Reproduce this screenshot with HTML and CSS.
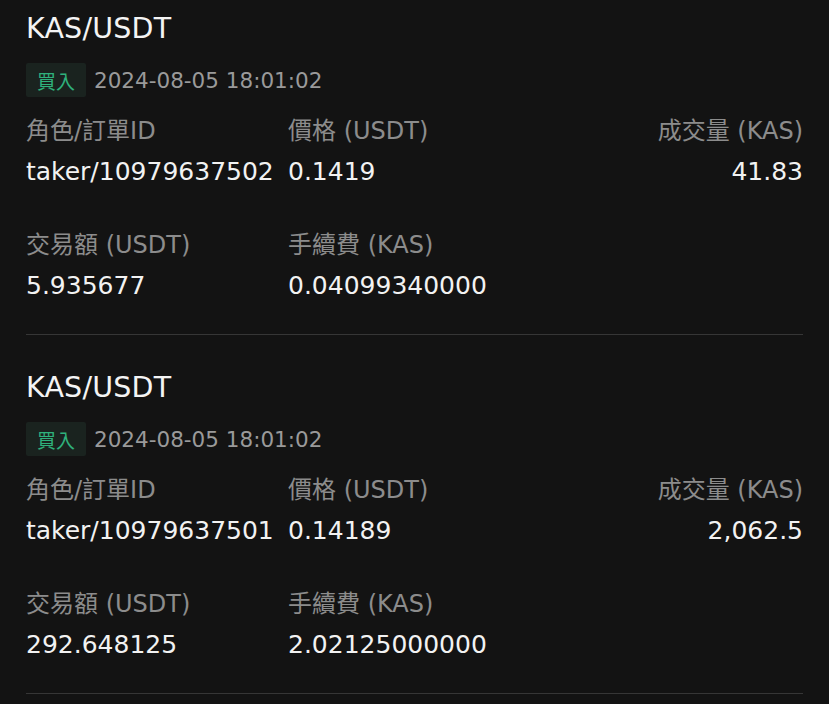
FILE: index.html
```html
<!DOCTYPE html>
<html lang="zh-Hant">
<head>
<meta charset="utf-8">
<title>成交明細</title>
<link rel="stylesheet" href="styles.css">
</head>
<body>
<div class="list">
  <section class="card">
    <h2 class="pair">KAS/USDT</h2>
    <div class="meta">
      <span class="badge">買入</span>
      <span class="date">2024-08-05 18:01:02</span>
    </div>
    <div class="grid">
      <div class="cell"><div class="label">角色/訂單ID</div><div class="value">taker/10979637502</div></div>
      <div class="cell"><div class="label">價格 (USDT)</div><div class="value">0.1419</div></div>
      <div class="cell right"><div class="label">成交量 (KAS)</div><div class="value">41.83</div></div>
      <div class="cell row2"><div class="label">交易額 (USDT)</div><div class="value">5.935677</div></div>
      <div class="cell row2"><div class="label">手續費 (KAS)</div><div class="value">0.04099340000</div></div>
    </div>
  </section>
  <section class="card">
    <h2 class="pair">KAS/USDT</h2>
    <div class="meta">
      <span class="badge">買入</span>
      <span class="date">2024-08-05 18:01:02</span>
    </div>
    <div class="grid">
      <div class="cell"><div class="label">角色/訂單ID</div><div class="value">taker/10979637501</div></div>
      <div class="cell"><div class="label">價格 (USDT)</div><div class="value">0.14189</div></div>
      <div class="cell right"><div class="label">成交量 (KAS)</div><div class="value">2,062.5</div></div>
      <div class="cell row2"><div class="label">交易額 (USDT)</div><div class="value">292.648125</div></div>
      <div class="cell row2"><div class="label">手續費 (KAS)</div><div class="value">2.02125000000</div></div>
    </div>
  </section>
</div>
</body>
</html>
```
FILE: styles.css
```css
html, body {
  margin: 0;
  padding: 0;
  background: #131313;
}
body {
  font-family: "DejaVu Sans", "Noto Sans CJK TC", sans-serif;
  color: #f2f2f2;
  width: 829px;
  height: 704px;
  overflow: hidden;
}
.list {
  padding: 0 26px;
}
.card {
  padding: 35px 0 32px;
  border-bottom: 1px solid #363636;
}
.card:first-child {
  padding-top: 11px;
}
.pair {
  margin: 0;
  font-size: 28.5px;
  font-weight: normal;
  line-height: 36px;
  color: #f4f4f4;
  letter-spacing: 0.2px;
}
.meta {
  margin-top: 16px;
  height: 34px;
  display: flex;
  align-items: center;
  gap: 8px;
}
.badge {
  height: 34px;
  padding: 0 11px;
  display: flex;
  align-items: center;
  background: #1a231f;
  color: #2fb17c;
  font-size: 19px;
  border-radius: 2px;
}
.date {
  font-size: 21.5px;
  color: #9a9a9a;
}
.grid {
  margin-top: 17px;
  display: grid;
  grid-template-columns: 262px 1fr auto;
  row-gap: 40px;
}
.cell.right {
  text-align: right;
}
.label {
  font-size: 24px;
  line-height: 34px;
  color: #8c8c8c;
}
.value {
  margin-top: 8px;
  font-size: 25px;
  line-height: 32px;
  color: #f2f2f2;
}
```
